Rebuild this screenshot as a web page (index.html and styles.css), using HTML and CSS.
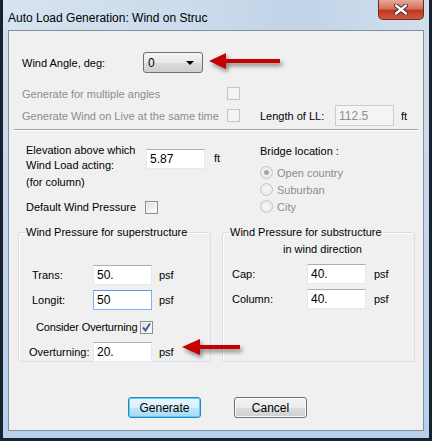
FILE: index.html
```html
<!DOCTYPE html>
<html lang="en">
<head>
  <meta charset="UTF-8" />
  <title>Auto Load Generation: Wind on Structure</title>
  <link rel="stylesheet" href="styles.css">
</head>
<body>
  <div class="window">
    <div class="titlebar">
      <span class="title">Auto Load Generation: Wind on Struc</span>
      <button class="close">
        <svg width="14" height="11" viewBox="0 0 14 11">
          <path d="M2 1.5 L12 9.5 M12 1.5 L2 9.5" stroke="#3a2a2a" stroke-width="4.2" stroke-linecap="round"/>
          <path d="M2 1.5 L12 9.5 M12 1.5 L2 9.5" stroke="#fff" stroke-width="2.4" stroke-linecap="round"/>
        </svg>
      </button>
    </div>

    <div class="client">
      <div class="top">
        <div class="row row-angle">
          <span class="lbl w-angle">Wind Angle, deg:</span>
          <div class="combo"><span>0</span><span class="caret"></span></div>
        </div>
        <div class="row row-multi">
          <span class="lbl w-gen disabled">Generate for multiple angles</span>
          <span class="check off"></span>
        </div>
        <div class="row row-live">
          <span class="lbl w-gen disabled">Generate Wind on Live at the same time</span>
          <span class="check off"></span>
          <span class="lbl w-ll">Length of LL:</span>
          <input class="field field-ll" value="112.5" disabled>
          <span class="unit">ft</span>
        </div>
      </div>

      <div class="sep"></div>

      <div class="middle">
        <div class="col-left">
          <div class="row row-elev">
            <div class="lbl w-elev">
              <div>Elevation above which</div>
              <div>Wind Load acting:</div>
              <div class="forcol">(for column)</div>
            </div>
            <input class="field field-elev" value="5.87">
            <span class="unit unit-elev">ft</span>
          </div>
          <div class="row row-default">
            <span class="lbl w-default">Default Wind Pressure</span>
            <span class="check"></span>
          </div>
        </div>
        <div class="col-right">
          <div class="bridge-title">Bridge location :</div>
          <div class="radio-row disabled"><span class="radio on"></span>Open country</div>
          <div class="radio-row disabled"><span class="radio"></span>Suburban</div>
          <div class="radio-row disabled"><span class="radio"></span>City</div>
        </div>
      </div>

      <div class="groups">
        <div class="group">
          <span class="legend">Wind Pressure for superstructure</span>
          <div class="row grow first">
            <span class="lbl w-sup pad-trans">Trans:</span>
            <input class="field" value="50.">
            <span class="unit">psf</span>
          </div>
          <div class="row grow">
            <span class="lbl w-sup pad-trans">Longit:</span>
            <input class="field focus" value="50">
            <span class="unit">psf</span>
          </div>
          <div class="row row-consider">
            <span class="lbl w-consider">Consider Overturning</span>
            <span class="check checked">
              <svg width="11" height="11" viewBox="0 0 11 11"><path d="M2 5.5 L4.5 8.5 L9 1.5" fill="none" stroke="#4a5fa0" stroke-width="2"/></svg>
            </span>
          </div>
          <div class="row grow row-over">
            <span class="lbl w-over">Overturning:</span>
            <input class="field" value="20.">
            <span class="unit">psf</span>
          </div>
        </div>
        <div class="group">
          <span class="legend">Wind Pressure for substructure</span>
          <div class="legend-2">in wind direction</div>
          <div class="row grow sub-first">
            <span class="lbl w-sub">Cap:</span>
            <input class="field" value="40.">
            <span class="unit unit-sub">psf</span>
          </div>
          <div class="row grow">
            <span class="lbl w-sub">Column:</span>
            <input class="field" value="40.">
            <span class="unit unit-sub">psf</span>
          </div>
        </div>
      </div>

      <div class="buttons">
        <button class="btn default">Generate</button>
        <button class="btn">Cancel</button>
      </div>

      <svg class="arrow arrow-angle" width="76" height="24" viewBox="0 0 76 24">
        <polygon points="1,9 18,1 18,17" fill="#c40000"/>
        <rect x="16" y="7" width="56" height="4" fill="#c40000"/>
      </svg>
      <svg class="arrow arrow-over" width="64" height="24" viewBox="0 0 64 24">
        <polygon points="1,9 19,1 19,17" fill="#c40000"/>
        <rect x="17" y="7" width="42" height="4" fill="#c40000"/>
      </svg>
    </div>
  </div>
</body>
</html>
```

FILE: styles.css
```css
body {
  margin: 0;
  background: #1b2838;
  font-family: "Liberation Sans", Arial, sans-serif;
  font-size: 11px;
  color: #000;
}

.window {
  width: 432px;
  height: 441px;
  box-sizing: border-box;
  border: 3px solid #18222f;
  border-top: 0;
  background: linear-gradient(180deg, #d3e0ee 0%, #c2d5ea 60%, #b8d0ea 100%);
  display: flex;
  flex-direction: column;
}

.titlebar {
  height: 30px;
  display: flex;
  align-items: center;
  background: linear-gradient(90deg, #d6e3f0 0%, #cbdbeb 45%, #c0d3e7 70%, #d2e0ee 100%);
}

.title {
  font-size: 12px;
  padding: 5px 0 0 5px;
  color: #000;
}

.close {
  margin-left: auto;
  margin-right: 5px;
  align-self: flex-start;
  width: 46px;
  height: 20px;
  padding: 0;
  border: 1px solid #6b2a22;
  border-top: 0;
  border-radius: 0 0 5px 5px;
  background: linear-gradient(180deg, #e8a99b 0%, #d7705c 45%, #c1371f 55%, #d0583c 100%);
  display: flex;
  align-items: center;
  justify-content: center;
}

.client {
  position: relative;
  margin: 0 5px;
  height: 401px;
  box-sizing: border-box;
  border: 1px solid #83909c;
  background: #f0f0f0;
}

.row {
  display: flex;
  align-items: center;
}

.lbl {
  white-space: nowrap;
  flex: none;
}

.disabled { color: #8d8d8d; }

.top { padding-left: 13px; }

.row-angle { margin-top: 21px; height: 21px; }
.w-angle { width: 121px; }

.combo {
  width: 60px;
  height: 21px;
  box-sizing: border-box;
  border: 1px solid #707070;
  border-radius: 3px;
  background: linear-gradient(180deg, #f4f4f4 0%, #e8e8e8 50%, #dcdcdc 51%, #cfcfcf 100%);
  display: flex;
  align-items: center;
  justify-content: space-between;
  padding: 0 8px 0 4px;
  font-size: 12px;
}

.caret {
  width: 0;
  height: 0;
  border-left: 4px solid transparent;
  border-right: 4px solid transparent;
  border-top: 4px solid #000;
}

.row-multi { margin-top: 14px; height: 13px; }
.row-live { margin-top: 5px; height: 21px; }
.w-gen { width: 205px; }
.w-ll { width: 75px; margin-left: 20px; }

.check {
  width: 13px;
  height: 13px;
  box-sizing: border-box;
  border: 1px solid #8e8f8f;
  background: linear-gradient(135deg, #d8d8d8 0%, #f4f4f4 60%, #fff 100%);
  box-shadow: inset 0 0 0 1px #f4f4f4;
  flex: none;
  display: flex;
  align-items: center;
  justify-content: center;
}

.check.off {
  border-color: #c4c4c4;
  background: #f4f4f4;
  box-shadow: none;
}

.field {
  width: 59px;
  height: 20px;
  box-sizing: border-box;
  border: 1px solid #e3e9ef;
  border-top-color: #abadb3;
  background: #fff;
  font-family: "Liberation Sans", Arial, sans-serif;
  font-size: 12px;
  padding: 0 3px;
  margin: 0;
  flex: none;
}

.field.focus {
  border-color: #7eb4ea;
  border-top-color: #569de5;
}

.field-ll {
  height: 21px;
  background: #f4f4f4;
  color: #8d8d8d;
  border-color: #c9cdd1;
}

.unit { margin-left: 7px; }

.sep {
  margin: 3px 5px 0;
  border-top: 1px solid #a0a0a0;
  border-bottom: 1px solid #fff;
}

.middle {
  display: flex;
  padding-left: 17px;
}

.col-left { width: 234px; }

.row-elev {
  align-items: flex-start;
  margin-top: 12px;
}

.w-elev { width: 120px; line-height: 15px; }
.forcol { margin-top: 2px; }
.field-elev { margin-top: 6px; }
.unit-elev { margin-top: 9px; margin-left: 9px; }

.row-default { margin-top: 10px; height: 14px; }
.w-default { width: 119px; }

.bridge-title {
  margin-top: 13px;
  line-height: 15px;
}

.radio-row {
  display: flex;
  align-items: center;
  height: 17px;
}

.bridge-title + .radio-row { margin-top: 5px; }

.radio {
  width: 13px;
  height: 13px;
  box-sizing: border-box;
  border: 1px solid #c4c4c4;
  border-radius: 50%;
  background: radial-gradient(circle, #f8f8f8 0%, #e4e4e4 100%);
  margin-right: 4px;
  display: flex;
  align-items: center;
  justify-content: center;
}

.radio.on::after {
  content: "";
  width: 5px;
  height: 5px;
  border-radius: 50%;
  background: #a8a8a8;
}

.groups {
  display: flex;
  gap: 11px;
  margin: 17px 0 0 9px;
}

.group {
  width: 193px;
  height: 130px;
  box-sizing: border-box;
  border: 1px solid #d5dfe5;
  border-radius: 3px;
  box-shadow: inset 1px 1px 0 #fff;
}

.legend {
  display: inline-block;
  margin: -8px 0 0 6px;
  padding: 0 1px;
  line-height: 15px;
  background: #f0f0f0;
  vertical-align: top;
}

.legend-2 {
  margin-top: -3px;
  padding-left: 60px;
  line-height: 15px;
}

.grow { height: 20px; margin-top: 5px; }
.grow.first { margin-top: 20px; }
.pad-trans { padding-left: 13px; }
.w-sup { width: 61px; }

.row-consider { margin-top: 10px; height: 14px; padding-left: 17px; }
.w-consider { letter-spacing: -0.15px; margin-right: 2px; }

.row-over { margin-top: 8px; padding-left: 10px; }
.w-over { width: 64px; }

.sub-first { margin-top: 7px; }
.w-sub { width: 75px; padding-left: 9px; }
.unit-sub { margin-left: 8px; }

.buttons {
  display: flex;
  justify-content: center;
  gap: 33px;
  padding-left: 3px;
  margin-top: 35px;
}

.btn {
  width: 73px;
  height: 21px;
  box-sizing: border-box;
  border: 1px solid #707070;
  border-radius: 3px;
  background: linear-gradient(180deg, #f2f2f2 0%, #ebebeb 50%, #dddddd 51%, #cfcfcf 100%);
  box-shadow: inset 0 0 0 1px #fcfcfc;
  font-family: "Liberation Sans", Arial, sans-serif;
  font-size: 12px;
  padding: 0;
}

.btn.default {
  border-color: #3c7fb1;
  background: linear-gradient(180deg, #eaf6fd 0%, #d9f0fc 50%, #bee6fd 51%, #a7d9f5 100%);
  box-shadow: inset 0 0 0 1px #48d8fb;
}

.arrow {
  position: absolute;
  filter: drop-shadow(2px 3px 2px rgba(0, 0, 0, 0.45));
}

.arrow-angle { left: 199px; top: 21px; }
.arrow-over { left: 172px; top: 307px; }
```
